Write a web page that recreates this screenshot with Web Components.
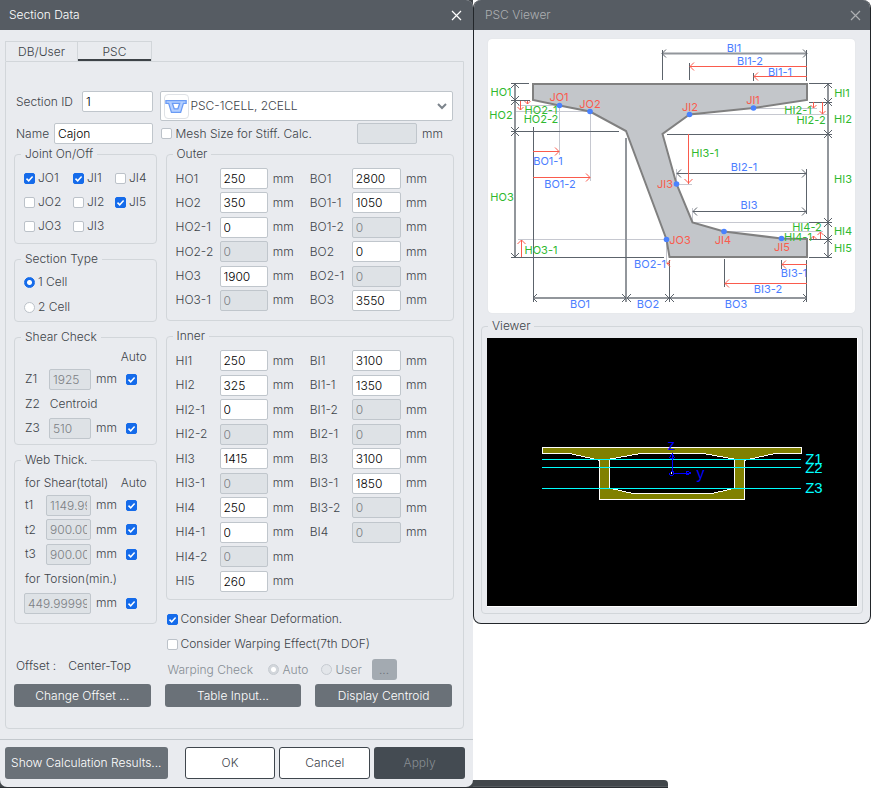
<!DOCTYPE html>
<html lang="en">
<head>
<meta charset="utf-8">
<title>Section Data</title>
<style>
body { margin: 0; background: #fff; font: 300 12px/16px Inter, "Liberation Sans", sans-serif; color: #3d4349; }
</style>
</head>
<body>
<section-app></section-app>
<script>
const define = (name, css, html, setup) => {
  const template = document.createElement('template');
  template.innerHTML = `<style>*{box-sizing:border-box}${css}</style>${html}`;
  customElements.define(name, class extends HTMLElement {
    connectedCallback() {
      if (this.shadowRoot) return;
      const root = this.attachShadow({ mode: 'open' });
      root.append(template.content.cloneNode(true));
      if (setup) setup(root, this);
    }
  });
};

/* Tick box or radio with its label */
define('choice-box', `
:host { display: block; }
label { display: flex; align-items: center; gap: var(--choice-gap, 3px); line-height: 16px; white-space: nowrap; }
input { appearance: none; flex: none; width: 11px; height: 11px; margin: 0; border: 1px solid #bcc2c9; border-radius: 2px; background: #fff; }
input[type=radio] { border-radius: 50%; }
input:checked { background: #156bea; border-color: #156bea; }
input[type=checkbox]:checked { background: #156bea url("data:image/svg+xml,%3Csvg xmlns='http://www.w3.org/2000/svg' viewBox='0 0 9 9'%3E%3Cpath d='M1.5 4.6 3.7 6.8 7.6 2.6' fill='none' stroke='white' stroke-width='1.5'/%3E%3C/svg%3E") center/9px no-repeat; }
input[type=radio]:checked { background: radial-gradient(circle, #fff 0 2px, #156bea 3px); }
input:disabled { background: #e3e6ea; border-color: #c6cbd1; }
input[type=radio]:disabled:checked { background: radial-gradient(circle, #fff 0 2px, #d3d7dc 3px); }
:host([disabled]) { color: #868d94; }
`, `<label><input type="checkbox"><span></span></label>`, (root, host) => {
  const input = root.querySelector('input');
  if (host.hasAttribute('radio')) { input.type = 'radio'; input.name = 'choice'; }
  input.defaultChecked = host.hasAttribute('checked');
  input.disabled = host.hasAttribute('disabled');
  const text = host.getAttribute('label');
  if (text) root.querySelector('span').textContent = text;
  else { root.querySelector('span').remove(); input.setAttribute('aria-label', host.getAttribute('name') || 'Auto'); }
});

/* Label, text box and unit on one line */
define('value-field', `
:host { display: flex; align-items: center; height: 21px; min-width: 0; }
label { flex: none; width: var(--label, 44px); white-space: nowrap; }
input { flex: 1; min-width: 0; width: 20px; height: 21px; margin: 0; padding: 0 3px; border: 1px solid #c0c6cc; border-radius: 2px; background: #fff; color: #000; font: inherit; }
input:disabled { background: #dee2e6; color: #7c8084; }
span { flex: none; width: var(--unit, 37px); margin-left: 5px; }
`, `<label for="v"></label><input id="v" type="text"><span>mm</span>`, (root, host) => {
  const label = root.querySelector('label'), input = root.querySelector('input');
  label.textContent = host.getAttribute('label') || '';
  if (!host.getAttribute('label')) { label.remove(); input.setAttribute('aria-label', host.getAttribute('name')); }
  input.defaultValue = host.getAttribute('value') || '';
  input.disabled = host.hasAttribute('disabled');
  if (host.hasAttribute('no-unit')) root.querySelector('span').remove();
});

define('group-box', `
:host { display: block; }
fieldset { margin: 0; padding: 0 9px var(--pad-bottom, 9px); min-width: 0; border: 1px solid #d2d6da; border-radius: 4px; }
legend { margin-left: -3px; padding: 0 4px; line-height: 16px; }
`, `<fieldset><legend></legend><slot></slot></fieldset>`, (root, host) => {
  root.querySelector('legend').textContent = host.getAttribute('label');
});

define('push-button', `
:host { display: block; min-width: 0; }
button { display: block; width: 100%; height: var(--height, 23px); margin: 0; padding: 0; border: 0; border-radius: 3px; background: #6a7178; color: #fff; font: inherit; white-space: nowrap; }
:host([kind=light]) button { background: #fff; color: #3d4349; border: 1px solid #3f464d; }
:host([kind=off]) button { background: #444b52; color: #888e93; }
:host([kind=faint]) button { background: #a3aab1; color: #70777e; }
`, `<button type="button"><slot></slot></button>`, (root, host) => {
  root.querySelector('button').disabled = ['off', 'faint'].includes(host.getAttribute('kind'));
});

define('dialog-window', `
:host { display: flex; flex-direction: column; overflow: hidden; background: #e9ebef; border-radius: 0 7px 7px 7px; }
header { display: flex; align-items: center; justify-content: space-between; height: 30px; padding: 0 11px 0 9px; background: #565c63; color: #fff; }
h1 { margin: 0; font: inherit; }
button { display: flex; padding: 0; border: 0; background: none; color: inherit; }
:host([inactive]) { border: 1px solid #22262a; border-top: 0; border-radius: 8px; }
:host([inactive]) header { padding: 0 9px 0 11px; color: #adafb2; }
`, `<header><h1></h1><button type="button" aria-label="Close"><svg width="11" height="11" viewBox="0 0 11 11"><path d="M1 1 10 10M10 1 1 10" fill="none" stroke="currentColor" stroke-width="1.2"/></svg></button></header><slot></slot>`, (root, host) => {
  root.querySelector('h1').textContent = host.getAttribute('label');
});

define('section-select', `
:host { display: flex; align-items: center; height: 30px; padding: 0 5px 0 3px; background: #fff; border: 1px solid #bfc5cb; border-radius: 2px; }
.icon { flex: none; border: 1px solid #dfe2e6; border-radius: 4px; }
select { appearance: none; flex: 1; min-width: 0; height: 26px; padding: 0 0 0 2px; border: 0; background: none; font: inherit; color: inherit; }
`, `<svg class="icon" width="25" height="25" viewBox="0 0 25 25"><path fill-rule="evenodd" d="M1 6H23V9H20L17 19H7L4 9H1ZM8 9 10 15H14L16 9Z" fill="#b5d0ff" stroke="#6a9bf5" stroke-width="1.4"/></svg>
<select aria-label="Section shape"><option>PSC-1CELL, 2CELL</option></select>
<svg width="10" height="8" viewBox="0 0 10 8"><path d="M1 2 5 6 9 2" fill="none" stroke="#7c848c" stroke-width="2"/></svg>`);

/* Dimension drawing of the girder cross-section */
define('section-diagram', `
:host { display: block; background: #fff; border-radius: 4px; overflow: hidden; box-shadow: 0 0 1px #cfd3d8; }
svg { display: block; width: 100%; height: auto; font: 400 11px Inter, sans-serif; }
.light { stroke: #c6c8d0; } .dark { stroke: #5c636b; } .grey { stroke: #92969b; stroke-width: 2; } .red { stroke: #fa5b4d; }
path { fill: none; }
`, `<svg viewBox="488 39 367 274" role="img" aria-label="Girder dimensions"></svg>`, (root) => {
  const path = (cls, d) => `<path class="${cls}" d="${d}"/>`;
  const head = { l: (x, y, s) => `M${x + s} ${y - s}L${x} ${y}L${x + s} ${y + s}`, r: (x, y, s) => `M${x - s} ${y - s}L${x} ${y}L${x - s} ${y + s}`,
                 u: (x, y, s) => `M${x - s} ${y + s}L${x} ${y}L${x + s} ${y + s}`, d: (x, y, s) => `M${x - s} ${y - s}L${x} ${y}L${x + s} ${y - s}` };
  const heads = (cls, list, s) => path(cls, list.map(([k, x, y]) => head[k](x, y, s)).join(''));
  const text = (fill, anchor, list) => `<g fill="${fill}" text-anchor="${anchor}">` + list.map(([t, x, y]) => `<text x="${x}" y="${y + 4}">${t}</text>`).join('') + '</g>';
  root.querySelector('svg').innerHTML =
    path('light', 'M518 105.5H559M514 111.5H590M559.5 105V155M590.5 111V181M518 239.5H666M666.5 240V263M753 108.5H817M689 114.5H828M676 184.5H692M676.5 169V184M692.5 208V222.5H809M724 231.5H823') +
    '<polygon points="533,84 807,84 807,100 753.5,108 689.5,114.5 662.5,134 676.5,184 692.5,222.5 724,231.5 781.5,238.5 807,239 807,257 669.5,257 666.5,239.5 626,131 590,111.5 559.5,105.5 533,100" fill="#c3c6ca" stroke="#808080" stroke-width="2"/>' +
    path('grey', 'M515 84V257M533 298H807M626 138V302M828 84V257M662 53.5H807') +
    path('dark', 'M511 83.5H529M511 100.5H530M511 131.5H619M511 257.5H664M533.5 127V302M669.5 260V302M806.5 260V302M781.5 260V269M724.5 259V287M662.5 50V80M806.5 50V81M689.5 63V80M753.5 73V81M809 83.5H832M809 102.5H832M667 134.5H832M809 222.5H832M809 239.5H832M809 257.5H832M677 173.5H807M693 211.5H807M806.5 169V214') +
    heads('dark', [['u', 515, 84], ['d', 515, 100], ['u', 515, 101], ['d', 515, 131], ['u', 515, 132], ['d', 515, 257], ['l', 533, 298], ['r', 626, 298], ['l', 627, 298], ['r', 669, 298], ['l', 670, 298], ['r', 807, 298],
      ['u', 828, 84], ['d', 828, 102], ['u', 828, 102], ['d', 828, 134], ['u', 828, 134], ['d', 828, 222], ['u', 828, 223], ['d', 828, 239], ['u', 828, 240], ['d', 828, 257], ['l', 662, 53.5], ['r', 807, 53.5], ['l', 677, 173.5], ['r', 806, 173.5], ['l', 693, 211.5], ['r', 806, 211.5]], 4) +
    path('red', 'M520.5 101V110M527.5 101V104M533 151.5H559M533 177.5H590M521.5 257V240M667 263.5H670M807 264.5H782M807 283.5H725M807 66.5H690M807 76.5H754M813.5 102V108M822.5 102V114M813.5 239V236M820.5 239V232M688.5 134V184') +
    heads('red', [['r', 559, 151.5], ['r', 590, 177.5], ['u', 521.5, 240], ['l', 782, 264.5], ['l', 725, 283.5], ['l', 690, 66.5], ['l', 754, 76.5], ['d', 688.5, 183]], 4) +
    heads('red', [['d', 520.5, 110], ['d', 527.5, 104], ['l', 667, 263.5], ['d', 813.5, 108], ['d', 822.5, 114], ['u', 813.5, 236], ['u', 820.5, 232]], 3) +
    '<g fill="#4a82ff">' + [[559.5,105.5],[590,111.5],[753.5,108],[689.5,114.5],[676.5,184],[724,231.5],[781.5,238.5],[666.5,239.5]].map(([x, y]) => `<circle cx="${x}" cy="${y}" r="2.8"/>`).join('') + '</g>' +
    text('#4a7dff', 'middle', [['BI1',734,48],['BI1-2',750,61],['BI1-1',780,72],['BI2-1',744,167],['BI3',749,205],['BI3-1',794,273],['BI3-2',768,289],['BO1',580,304],['BO2',648,304],['BO3',736,304],['BO2-1',650,264],['BO1-1',548,161],['BO1-2',560,184]]) +
    text('#2fb92f', 'middle', [['HO1',501,92],['HO2',501,115],['HO3',502,197],['HO2-1',541,110],['HO2-2',541,119],['HO3-1',541,250],['HI1',842,93],['HI2',843,119],['HI3',843,179],['HI4',843,231],['HI5',843,248],['HI2-1',798,110],['HI2-2',811,120],['HI3-1',705,153],['HI4-2',807,227],['HI4-1',798,237]]) +
    text('#fa5b4d', 'middle', [['JO1',559,97],['JO2',590,104],['JO3',680,240],['JI1',753,100],['JI2',690,107],['JI3',665,184],['JI4',723,240],['JI5',782,247]]);
});

/* Model view of the section with its check heights */
define('section-view', `
:host { display: block; background: #000; border-right: 1px solid #fff; border-bottom: 1px solid #fff; }
svg { display: block; width: 100%; height: auto; font: 400 15px "Liberation Sans", sans-serif; }
`, `<svg viewBox="487 338 371 269" role="img" aria-label="Section view">
<g shape-rendering="crispEdges">
<path fill="#808000" stroke="#fff" fill-rule="evenodd" d="M542.5 447.5H802.5V453.5H777.5L745.5 460.5V499.5H599.5V460.5L568.5 453.5H542.5ZM642.5 453.5H702.5L735.5 459.5V488.5L714.5 493.5H631.5L609.5 488.5V459.5Z"/>
<path stroke="#0ff" d="M542 459.5H802M542 467.5H802M542 488.5H802"/>
<path stroke="#00f" fill="none" d="M672.5 453V471M670 458.5 672.5 454 675 458.5ZM674 473.5H692M687.5 471.5V475.5L692 473.5ZM671 471.5H674V475.5H670V473"/>
<path fill="#fff" d="M671 472h2v2h-2z"/>
</g>
<g fill="#0ff"><text x="806" y="464">Z1</text><text x="806" y="473">Z2</text><text x="806" y="493">Z3</text></g>
<g fill="#00f"><text x="668" y="450">z</text><text x="697" y="479" font-size="16">y</text></g>
</svg>`);

const fields = (list) => list.map(([label, value, off]) => `<value-field label="${label}" value="${value}"${off ? ' disabled' : ''}></value-field>`).join('');

define('psc-form', `
:host { display: grid; grid-template-columns: 142fr 289fr; column-gap: 9px; align-items: start; padding: 29px 9px 21px 8px; border: 1px solid #d2d6da; border-radius: 0 0 4px 4px; }
.ids { display: grid; gap: 11px; margin-right: 4px; }
.ids value-field { --label: 38px; padding-left: 2px; }
.ids value-field:first-child { --label: 66px; }
.shape { margin-left: -6px; display: grid; gap: 2px; }
section-select { margin-right: 1px; }
.mesh { display: flex; align-items: center; --choice-gap: 4px; padding-left: 1px; }
.mesh value-field { width: 97px; margin-left: auto; --unit: 32px; }
.stack { display: grid; gap: 7px; margin-top: 2px; }
.rows { display: grid; align-content: space-between; }
.joint { grid-template-columns: 49px 42px 1fr; min-height: 64px; margin-top: 8px; }
.type { min-height: 41px; margin-top: 7px; }
.shear { min-height: 90px; margin-top: 4px; }
.web { min-height: 139px; margin-top: 7px; }
.line { display: flex; align-items: center; justify-content: space-between; height: 21px; padding-left: 1px; }
.line:first-child { height: 16px; }
.line value-field { --label: 24px; --unit: 29px; flex: none; width: 100px; }
.web value-field { --label: 21px; }
.line > choice-box { padding-right: 10px; }
.centroid { justify-content: start; gap: 10px; }
.line.flush { padding-left: 0; }
.line.flush value-field { width: 101px; }
.dims { display: grid; grid-template-columns: 1fr 1fr; margin-top: 6px; }
.dims .rows + .rows { --label: 42px; --unit: 38px; }
.outer .rows { height: 143px; }
.inner .rows { height: 242px; }
.inner .short { height: 193px; }
.right { display: grid; gap: 7px; margin-top: 2px; }
.options { display: grid; gap: 9px; padding-left: 1px; margin-top: 4px; }
.warp { display: grid; grid-template-columns: 100px 53px 51px 25px; align-items: center; color: #868d94; padding-left: 2px; margin-top: 7px; --choice-gap: 4px; }
.warp push-button { --height: 21px; }
.offset { display: flex; gap: 12px; padding-left: 2px; align-self: end; margin-bottom: 6px; }
.actions { grid-column: 1 / -1; display: grid; grid-template-columns: 1fr 1fr 1fr; column-gap: 14px; padding-right: 2px; margin-top: 4px; }
`, `
<div class="ids"><value-field label="Section ID" value="1" no-unit></value-field><value-field label="Name" value="Cajon" no-unit></value-field></div>
<div class="shape"><section-select></section-select>
  <div class="mesh"><choice-box label="Mesh Size for Stiff. Calc."></choice-box><value-field name="Mesh size" disabled></value-field></div></div>
<div class="stack">
  <group-box label="Joint On/Off"><div class="rows joint">
    <choice-box label="JO1" checked></choice-box><choice-box label="JI1" checked></choice-box><choice-box label="JI4"></choice-box>
    <choice-box label="JO2"></choice-box><choice-box label="JI2"></choice-box><choice-box label="JI5" checked></choice-box>
    <choice-box label="JO3"></choice-box><choice-box label="JI3"></choice-box></div></group-box>
  <group-box label="Section Type" style="--pad-bottom:6px"><div class="rows type"><choice-box radio label="1 Cell" checked></choice-box><choice-box radio label="2 Cell"></choice-box></div></group-box>
  <group-box label="Shear Check" style="--pad-bottom:5px"><div class="rows shear">
    <div class="line"><span></span><span>Auto</span></div>
    <div class="line"><value-field label="Z1" value="1925" disabled></value-field><choice-box checked></choice-box></div>
    <div class="line centroid"><span>Z2</span><span>Centroid</span></div>
    <div class="line"><value-field label="Z3" value="510" disabled></value-field><choice-box checked></choice-box></div></div></group-box>
  <group-box label="Web Thick."><div class="rows web">
    <div class="line"><span>for Shear(total)</span><span>Auto</span></div>
    <div class="line"><value-field label="t1" value="1149.99999" disabled></value-field><choice-box checked></choice-box></div>
    <div class="line"><value-field label="t2" value="900.00000" disabled></value-field><choice-box checked></choice-box></div>
    <div class="line"><value-field label="t3" value="900.00000" disabled></value-field><choice-box checked></choice-box></div>
    <div class="line"><span>for Torsion(min.)</span></div>
    <div class="line flush"><value-field name="Torsion thickness" value="449.9999999" disabled></value-field><choice-box checked></choice-box></div></div></group-box>
</div>
<div class="right">
  <group-box label="Outer"><div class="dims outer">
    <div class="rows">${fields([['HO1',250],['HO2',350],['HO2-1',0],['HO2-2',0,1],['HO3',1900],['HO3-1',0,1]])}</div>
    <div class="rows">${fields([['BO1',2800],['BO1-1',1050],['BO1-2',0,1],['BO2',0],['BO2-1',0,1],['BO3',3550]])}</div></div></group-box>
  <group-box label="Inner" style="--pad-bottom:7px"><div class="dims inner">
    <div class="rows">${fields([['HI1',250],['HI2',325],['HI2-1',0],['HI2-2',0,1],['HI3',1415],['HI3-1',0,1],['HI4',250],['HI4-1',0],['HI4-2',0,1],['HI5',260]])}</div>
    <div class="rows short">${fields([['BI1',3100],['BI1-1',1350],['BI1-2',0,1],['BI2-1',0,1],['BI3',3100],['BI3-1',1850],['BI3-2',0,1],['BI4',0,1]])}</div></div></group-box>
  <div class="options"><choice-box label="Consider Shear Deformation." checked></choice-box><choice-box label="Consider Warping Effect(7th DOF)"></choice-box></div>
</div>
<div class="offset"><span>Offset :</span><span>Center-Top</span></div>
<div class="warp"><span>Warping Check</span><choice-box radio checked disabled label="Auto"></choice-box><choice-box radio disabled label="User"></choice-box><push-button kind="faint">...</push-button></div>
<div class="actions"><push-button>Change Offset ...</push-button><push-button>Table Input...</push-button><push-button>Display Centroid</push-button></div>
`);

define('section-app', `
:host { display: grid; grid-template-columns: 473fr 398fr; min-height: 100vh; }
.main { display: grid; min-width: 0; background: #42474b; border-bottom: 1px solid #2a2e32; }
.body { padding: 11px 9px 9px 5px; }
[role=tablist] { display: flex; }
[role=tab] { height: 20px; margin: 0; padding: 0; width: 73px; border: 1px solid #d2d6da; border-bottom: 0; background: none; font: inherit; color: inherit; }
[role=tab] + [role=tab] { width: 74px; border-left: 0; box-shadow: inset 0 -2px #3d4247; }
footer { display: grid; grid-template-columns: minmax(0, 176fr) 91fr 91fr 91fr; column-gap: 4px; margin-top: auto; padding: 7px 8px 8px 5px; border-top: 1px solid #c3c8cd; --height: 32px; }
footer > :first-child { margin-right: 13px; }
.side { display: flex; flex-direction: column; justify-content: space-between; min-width: 0; }
section-diagram { margin: 9px 15px 5px 14px; }
.viewer { margin: 0 7px 9px; }
.viewer section-view { margin: 4px -5px -3px -4px; }
.dock { width: 49%; height: 8px; background: linear-gradient(#42474b 0 6px, #565b5f 6px 7px, #2a2e32 7px); border-top-right-radius: 4px; }
`, `
<div class="main"><dialog-window label="Section Data">
  <div class="body"><div role="tablist"><button role="tab" aria-selected="false">DB/User</button><button role="tab" aria-selected="true">PSC</button></div><psc-form></psc-form></div>
  <footer><push-button>Show Calculation Results...</push-button><push-button kind="light">OK</push-button><push-button kind="light">Cancel</push-button><push-button kind="off">Apply</push-button></footer>
</dialog-window></div>
<div class="side"><dialog-window label="PSC Viewer" inactive>
  <section-diagram></section-diagram>
  <group-box class="viewer" label="Viewer"><section-view></section-view></group-box>
</dialog-window><div class="dock"></div></div>
`);
</script>
</body>
</html>
